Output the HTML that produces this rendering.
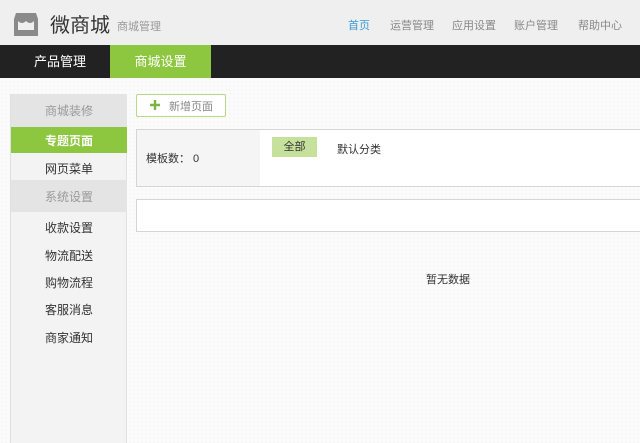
<!DOCTYPE html>
<html><head><meta charset="utf-8"><style>
*{margin:0;padding:0;box-sizing:border-box}
body{width:640px;height:443px;overflow:hidden;background:#fbfbfb;font-family:"Liberation Sans","Noto Sans CJK SC",sans-serif;font-size:12px;color:#333;position:relative;
background-image:radial-gradient(#ececec 0.6px,transparent 0.8px);background-size:4px 4px}
.a{position:absolute}
.hd{left:0;top:0;width:640px;height:45px;background:#efefef}
.nav{left:0;top:45px;width:640px;height:33px;background:#222}
.tab{top:45px;height:33px;line-height:33px;font-size:13px;color:#fff;text-align:center}
.side{left:10px;top:94px;width:117px;height:349px;background:#f3f3f3;border-left:1px solid #e0e0e0;border-right:1px solid #e0e0e0}
.si{position:absolute;left:0;width:116px;text-align:center;font-size:12px;color:#333}
</style></head><body>
<div class="a hd"></div>
<svg class="a" style="left:14px;top:13px" width="24" height="23" viewBox="0 0 24 23"><path d="M2 0h20l2 6v17H0V6z" fill="#8a8a8a"/><path d="M4 8q4 4 8 0q4 4 8 0v9H4z" fill="#efefef"/></svg>
<div class="a" style="left:50px;top:9px;font-size:20px;color:#333">微商城</div>
<div class="a" style="left:117px;top:18px;font-size:11px;color:#999">商城管理</div>
<div class="a" style="left:348px;top:17px;font-size:11px;color:#3a9bd5">首页</div>
<div class="a" style="left:390px;top:17px;font-size:11px;color:#888">运营管理</div>
<div class="a" style="left:452px;top:17px;font-size:11px;color:#888">应用设置</div>
<div class="a" style="left:514px;top:17px;font-size:11px;color:#888">账户管理</div>
<div class="a" style="left:578px;top:17px;font-size:11px;color:#888">帮助中心</div>
<div class="a nav"></div>
<div class="a tab" style="left:10px;width:100px">产品管理</div>
<div class="a tab" style="left:110px;width:101px;background:#8dc63f">商城设置</div>
<div class="a side"></div>
<div class="a" style="left:11px;top:94px;width:116px;height:33px;background:#e4e4e4"></div>
<div class="si" style="left:11px;top:102px;color:#999">商城装修</div>
<div class="a" style="left:11px;top:127px;width:116px;height:26px;background:#8dc63f"></div>
<div class="si" style="left:11px;top:132px;color:#fff;font-weight:bold">专题页面</div>
<div class="si" style="left:11px;top:160px">网页菜单</div>
<div class="a" style="left:11px;top:180px;width:116px;height:32px;background:#e4e4e4"></div>
<div class="si" style="left:11px;top:188px;color:#999">系统设置</div>
<div class="si" style="left:11px;top:219px">收款设置</div>
<div class="si" style="left:11px;top:247px">物流配送</div>
<div class="si" style="left:11px;top:274px">购物流程</div>
<div class="si" style="left:11px;top:301px">客服消息</div>
<div class="si" style="left:11px;top:329px">商家通知</div>
<div class="a" style="left:136px;top:94px;width:90px;height:23px;border:1px solid #b7d98a;background:#fff;border-radius:2px"></div>
<svg class="a" style="left:150px;top:100px" width="10" height="10"><path d="M5 0v10M0 5h10" stroke="#7cb342" stroke-width="2.4"/></svg>
<div class="a" style="left:169px;top:98px;font-size:11px;color:#888">新增页面</div>
<div class="a" style="left:136px;top:129px;width:504px;height:58px;border:1px solid #d5d5d5;border-right:none;background:#fff"></div>
<div class="a" style="left:137px;top:130px;width:123px;height:56px;background:#f5f5f5"></div>
<div class="a" style="left:146px;top:150px;font-size:11px">模板数： 0</div>
<div class="a" style="left:272px;top:137px;width:45px;height:20px;background:#c6e19b;text-align:center;line-height:20px;font-size:11px">全部</div>
<div class="a" style="left:337px;top:141px;font-size:11px">默认分类</div>
<div class="a" style="left:136px;top:199px;width:504px;height:33px;border:1px solid #d5d5d5;border-right:none;background:#fff"></div>
<div class="a" style="left:426px;top:271px;font-size:11px">暂无数据</div>
</body></html>
